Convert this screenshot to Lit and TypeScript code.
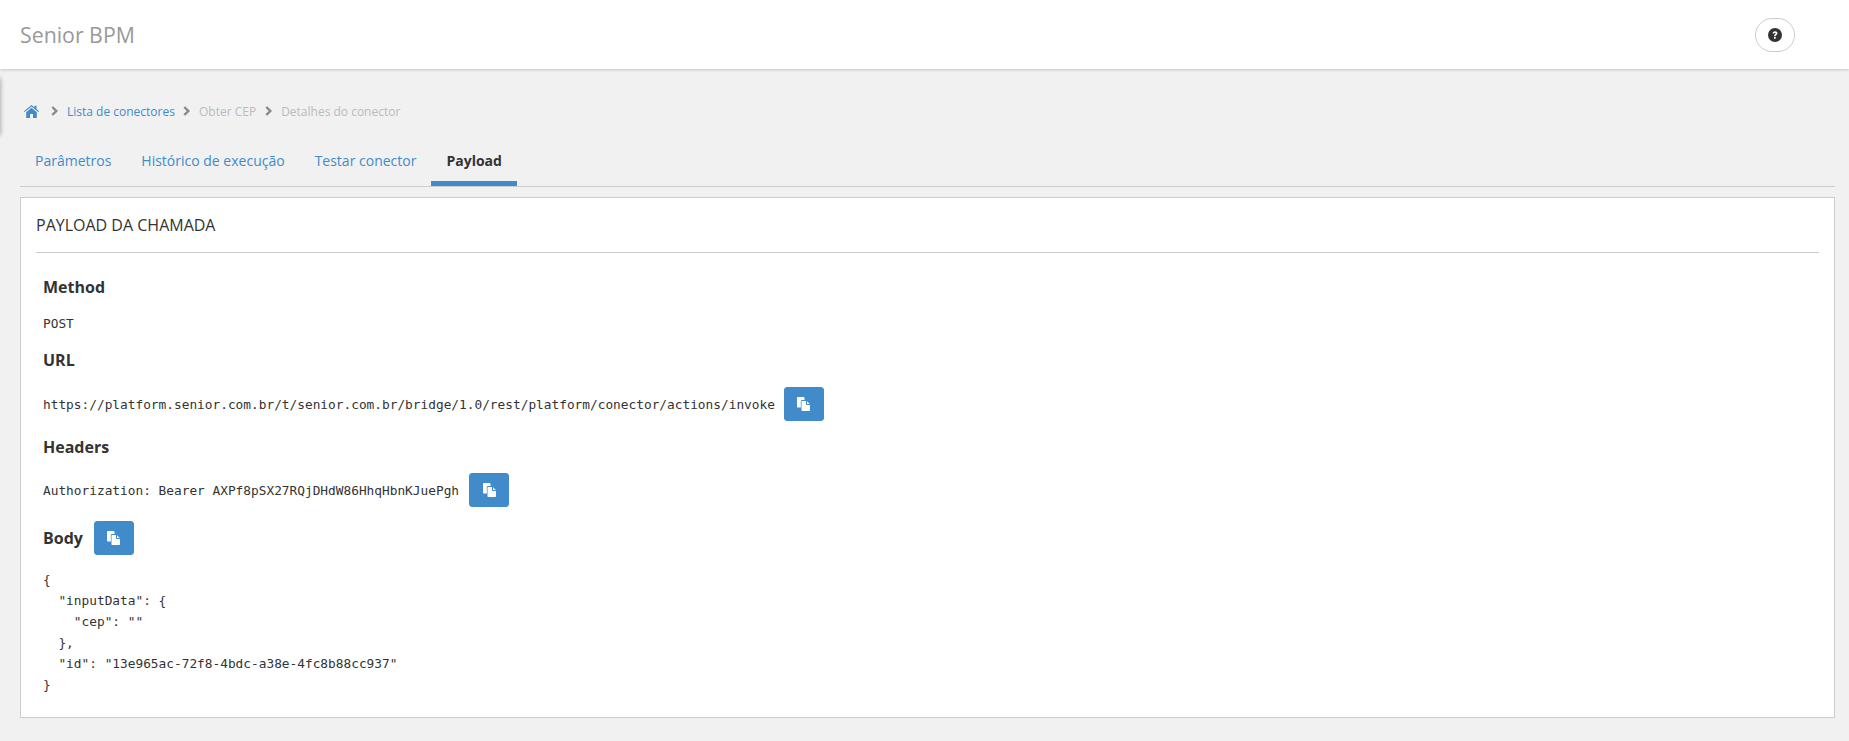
import { LitElement, html, css, svg } from "lit";
import { customElement } from "lit/decorators.js";

const copyIcon = svg`<svg class="ci" viewBox="0 0 13 14" width="13" height="14"><path fill="#fff" d="M1 0h5.500c.5 0 1 .4 1 1v2H5.200C4.400 3 3.800 3.600 3.800 4.400V10.500H1c-.6 0-1-.4-1-1V1c0-.6.400-1 1-1z"/><path fill="#fff" d="M5.500 4H9v3c0 .6.400 1 1 1h3v5c0 .6-.4 1-1 1H5.500c-.6 0-1-.4-1-1V5c0-.6.400-1 1-1zM10 4.200 12.800 7H10z"/></svg>`;

@customElement("app-root")
export class AppRoot extends LitElement {
  static styles = css`
    :host { display: block; height: 741px; background: #f1f1f1; font-family: "Open Sans", sans-serif; color: #333; font-size: 14px; position: relative; overflow: hidden; }
    * { box-sizing: border-box; }
    .top { height: 69px; background: #fff; box-shadow: 0 1px 3px rgba(0,0,0,.18); display: flex; align-items: center; justify-content: space-between; padding-left: 20px; position: relative; }
    .brand { font-size: 21.3px; color: #999; }
    .help { width: 40px; height: 34px; border: 1px solid #ccc; border-radius: 17px; background: #fff; display: flex; align-items: center; justify-content: center; margin-right: 54px; }
    .edge { position: absolute; left: -4px; top: 78px; width: 4px; height: 57px; background: #999; box-shadow: 0 0 5px rgba(0,0,0,.4); }
    main { padding: 0 14px 0 20px; }
    .crumbs { display: flex; align-items: center; height: 18px; margin-top: 33px; font-size: 12px; color: #bbb; padding-left: 4px; }
    .crumbs svg.home { margin-right: 12px; }
    .crumbs .sep { margin-right: 9px; }
    .crumbs a { color: #428bca; margin-right: 8px; }
    .crumbs span.t { margin-right: 9px; }
    .tabs { display: flex; margin-top: 14px; height: 53px; border-bottom: 1px solid #ccc; font-size: 14px; }
    .tab { padding: 17px 15px 0; color: #428bca; line-height: 20px; height: 52px; }
    .tab.on { color: #333; font-weight: 700; border-bottom: 5px solid #428bca; }
    .card { margin-top: 10px; background: #fff; border: 1px solid #ccc; height: 521px; padding: 0 15px; }
    .card h2 { margin: 0; font-size: 16px; font-weight: 400; height: 55px; line-height: 54px; border-bottom: 1px solid #ccc; color: #333; }
    .body { padding: 0 7px; }
    h3 { margin: 0; font-size: 16px; font-weight: 700; line-height: 22px; color: #333; }
    code, pre { font-family: "DejaVu Sans Mono", monospace; font-size: 12.8px; color: #333; margin: 0; }
    .line { display: flex; align-items: center; gap: 10px; }
    .btn { width: 40px; height: 34px; background: #428bca; border: 1px solid #428bca; border-radius: 3px; display: flex; align-items: center; justify-content: center; padding: 0; }
    .ci { display: block; width: 13px; height: 14px; }
    .m1 { margin-top: 23px; }
    .post { margin-top: 15px; height: 20px; line-height: 20px; }
    .m2 { margin-top: 16px; }
    .url { margin-top: 16px; gap: 9px; }
    .m3 { margin-top: 15px; }
    .hdr { margin-top: 15px; }
    .bodyh { margin-top: 14px; gap: 11px; }
    pre { margin-top: 14px; line-height: 21px; }
  `;

  render() {
    const chev = html`<svg class="sep" width="7" height="10" viewBox="0 0 7 10"><path d="M1.300 1 5.300 5l-4 4" fill="none" stroke="#888" stroke-width="2.400"/></svg>`;
    return html`
      <header class="top">
        <div class="brand">Senior BPM</div>
        <div class="help"><svg width="14" height="14" viewBox="0 0 14 14"><circle cx="7" cy="7" r="7" fill="#333"/><path d="M4.600 5.300c.2-1.300 1.200-2 2.500-2 1.300 0 2.400.8 2.400 2 0 1.800-1.900 1.700-1.900 3H6c0-2 1.600-2 1.600-2.800 0-.4-.3-.7-.7-.7-.5 0-.7.300-.9 1z M6 9h1.700v1.800H6z" fill="#fff"/></svg></div>
      </header>
      <div class="edge"></div>
      <main>
        <nav class="crumbs">
          <svg class="home" width="15" height="13" viewBox="0 0 15 13"><path fill="#428bca" d="M7.500 0 0 6.200l.7.900L7.500 1.500l6.800 5.600.7-.9-2.500-2.100V.8h-2v1.700L7.500 0zM7.500 2.800 2.200 7.200V13h3.800V9h3v4h3.800V7.200L7.500 2.800z"/></svg>
          ${chev}<a>Lista de conectores</a>${chev}<span class="t">Obter CEP</span>${chev}<span class="t">Detalhes do conector</span>
        </nav>
        <div class="tabs">
          <div class="tab">Parâmetros</div>
          <div class="tab">Histórico de execução</div>
          <div class="tab">Testar conector</div>
          <div class="tab on">Payload</div>
        </div>
        <section class="card">
          <h2>PAYLOAD DA CHAMADA</h2>
          <div class="body">
            <h3 class="m1">Method</h3>
            <div class="post"><code>POST</code></div>
            <h3 class="m2">URL</h3>
            <div class="line url"><code>https://platform.senior.com.br/t/senior.com.br/bridge/1.0/rest/platform/conector/actions/invoke</code><button class="btn">${copyIcon}</button></div>
            <h3 class="m3">Headers</h3>
            <div class="line hdr"><code>Authorization: Bearer AXPf8pSX27RQjDHdW86HhqHbnKJuePgh</code><button class="btn">${copyIcon}</button></div>
            <div class="line bodyh"><h3>Body</h3><button class="btn">${copyIcon}</button></div>
            <pre>{
  "inputData": {
    "cep": ""
  },
  "id": "13e965ac-72f8-4bdc-a38e-4fc8b88cc937"
}</pre>
          </div>
        </section>
      </main>`;
  }
}
